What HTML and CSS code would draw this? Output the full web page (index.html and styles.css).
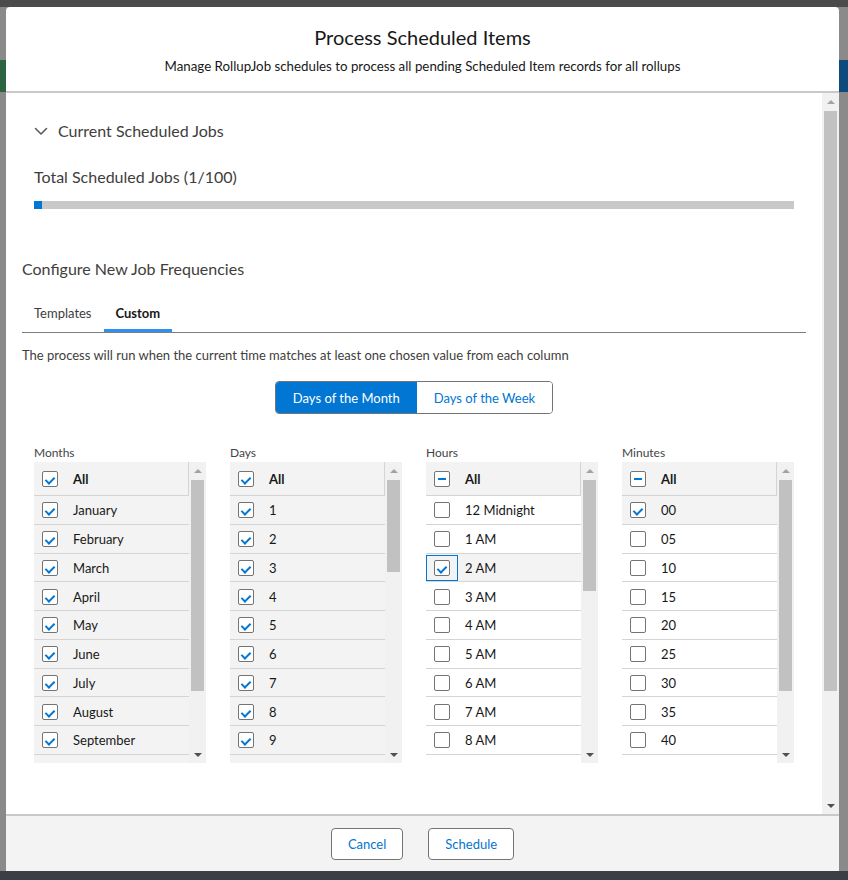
FILE: index.html
```html
<!DOCTYPE html>
<html lang="en">
<head>
<meta charset="utf-8">
<title>Process Scheduled Items</title>
<link rel="stylesheet" href="styles.css">
</head>
<body>
<div class="backdrop">
  <div class="bd-top"></div>
  <div class="bd-mid"></div>
  <div class="bd-band"></div>
  <div class="bd-rest"></div>
  <div class="bd-bottom"></div>
</div>

<section class="modal">
  <header class="modal-header">
    <h1>Process Scheduled Items</h1>
    <p>Manage RollupJob schedules to process all pending Scheduled Item records for all rollups</p>
  </header>

  <div class="modal-body">
    <div class="body-content">
      <div class="section">
        <div class="section-title">
          <svg class="chevron" width="14" height="14" viewBox="0 0 14 14"><path d="M1.5 4.5 L7 10 L12.5 4.5" fill="none" stroke="#5c5c5c" stroke-width="1.6" stroke-linecap="round" stroke-linejoin="round"/></svg>
          <span>Current Scheduled Jobs</span>
        </div>
        <div class="total">Total Scheduled Jobs (1/100)</div>
        <div class="progress"><div class="progress-fill" style="width:1%"></div></div>
      </div>

      <h2 class="configure">Configure New Job Frequencies</h2>

      <div class="tabs">
        <div class="tab">Templates</div>
        <div class="tab active">Custom</div>
      </div>

      <p class="desc">The process will run when the current time matches at least one chosen value from each column</p>

      <div class="toggle-wrap">
        <div class="btn-group">
          <button class="seg active">Days of the Month</button>
          <button class="seg">Days of the Week</button>
        </div>
      </div>

      <div class="columns">
        <div class="col">
          <div class="col-label">Months</div>
          <div class="listbox">
            <div class="list filled">
              <div class="row head"><span class="cell"><span class="cb on"></span></span><span class="label">All</span></div>
              <div class="row sel"><span class="cell"><span class="cb on"></span></span><span class="label">January</span></div>
              <div class="row sel"><span class="cell"><span class="cb on"></span></span><span class="label">February</span></div>
              <div class="row sel"><span class="cell"><span class="cb on"></span></span><span class="label">March</span></div>
              <div class="row sel"><span class="cell"><span class="cb on"></span></span><span class="label">April</span></div>
              <div class="row sel"><span class="cell"><span class="cb on"></span></span><span class="label">May</span></div>
              <div class="row sel"><span class="cell"><span class="cb on"></span></span><span class="label">June</span></div>
              <div class="row sel"><span class="cell"><span class="cb on"></span></span><span class="label">July</span></div>
              <div class="row sel"><span class="cell"><span class="cb on"></span></span><span class="label">August</span></div>
              <div class="row sel"><span class="cell"><span class="cb on"></span></span><span class="label">September</span></div>
            </div>
            <div class="vscroll">
              <span class="arrow up"></span>
              <div class="track"><div class="thumb" style="height:211px"></div></div>
              <span class="arrow down"></span>
            </div>
          </div>
        </div>

        <div class="col">
          <div class="col-label">Days</div>
          <div class="listbox">
            <div class="list filled">
              <div class="row head"><span class="cell"><span class="cb on"></span></span><span class="label">All</span></div>
              <div class="row sel"><span class="cell"><span class="cb on"></span></span><span class="label">1</span></div>
              <div class="row sel"><span class="cell"><span class="cb on"></span></span><span class="label">2</span></div>
              <div class="row sel"><span class="cell"><span class="cb on"></span></span><span class="label">3</span></div>
              <div class="row sel"><span class="cell"><span class="cb on"></span></span><span class="label">4</span></div>
              <div class="row sel"><span class="cell"><span class="cb on"></span></span><span class="label">5</span></div>
              <div class="row sel"><span class="cell"><span class="cb on"></span></span><span class="label">6</span></div>
              <div class="row sel"><span class="cell"><span class="cb on"></span></span><span class="label">7</span></div>
              <div class="row sel"><span class="cell"><span class="cb on"></span></span><span class="label">8</span></div>
              <div class="row sel"><span class="cell"><span class="cb on"></span></span><span class="label">9</span></div>
            </div>
            <div class="vscroll">
              <span class="arrow up"></span>
              <div class="track"><div class="thumb" style="height:92px"></div></div>
              <span class="arrow down"></span>
            </div>
          </div>
        </div>

        <div class="col">
          <div class="col-label">Hours</div>
          <div class="listbox">
            <div class="list">
              <div class="row head"><span class="cell"><span class="cb mixed"></span></span><span class="label">All</span></div>
              <div class="row"><span class="cell"><span class="cb"></span></span><span class="label">12 Midnight</span></div>
              <div class="row"><span class="cell"><span class="cb"></span></span><span class="label">1 AM</span></div>
              <div class="row sel"><span class="cell focus"><span class="cb on"></span></span><span class="label">2 AM</span></div>
              <div class="row"><span class="cell"><span class="cb"></span></span><span class="label">3 AM</span></div>
              <div class="row"><span class="cell"><span class="cb"></span></span><span class="label">4 AM</span></div>
              <div class="row"><span class="cell"><span class="cb"></span></span><span class="label">5 AM</span></div>
              <div class="row"><span class="cell"><span class="cb"></span></span><span class="label">6 AM</span></div>
              <div class="row"><span class="cell"><span class="cb"></span></span><span class="label">7 AM</span></div>
              <div class="row"><span class="cell"><span class="cb"></span></span><span class="label">8 AM</span></div>
            </div>
            <div class="vscroll">
              <span class="arrow up"></span>
              <div class="track"><div class="thumb" style="height:111px"></div></div>
              <span class="arrow down"></span>
            </div>
          </div>
        </div>

        <div class="col">
          <div class="col-label">Minutes</div>
          <div class="listbox">
            <div class="list">
              <div class="row head"><span class="cell"><span class="cb mixed"></span></span><span class="label">All</span></div>
              <div class="row sel"><span class="cell"><span class="cb on"></span></span><span class="label">00</span></div>
              <div class="row"><span class="cell"><span class="cb"></span></span><span class="label">05</span></div>
              <div class="row"><span class="cell"><span class="cb"></span></span><span class="label">10</span></div>
              <div class="row"><span class="cell"><span class="cb"></span></span><span class="label">15</span></div>
              <div class="row"><span class="cell"><span class="cb"></span></span><span class="label">20</span></div>
              <div class="row"><span class="cell"><span class="cb"></span></span><span class="label">25</span></div>
              <div class="row"><span class="cell"><span class="cb"></span></span><span class="label">30</span></div>
              <div class="row"><span class="cell"><span class="cb"></span></span><span class="label">35</span></div>
              <div class="row"><span class="cell"><span class="cb"></span></span><span class="label">40</span></div>
            </div>
            <div class="vscroll">
              <span class="arrow up"></span>
              <div class="track"><div class="thumb" style="height:211px"></div></div>
              <span class="arrow down"></span>
            </div>
          </div>
        </div>
      </div>
    </div>

    <div class="vscroll main">
      <span class="arrow up"></span>
      <div class="track"><div class="thumb" style="height:580px"></div></div>
      <span class="arrow down"></span>
    </div>
  </div>

  <footer class="modal-footer">
    <button class="btn">Cancel</button>
    <button class="btn">Schedule</button>
  </footer>
</section>
</body>
</html>
```

FILE: styles.css
```css
* {
  box-sizing: border-box;
  margin: 0;
  padding: 0;
}

html,
body {
  width: 848px;
  height: 880px;
  overflow: hidden;
}

body {
  position: relative;
  font-family: Lato, "Liberation Sans", sans-serif;
  color: #181818;
}

/* underlying page, dimmed */
.backdrop {
  display: flex;
  flex-direction: column;
  height: 880px;
}

.bd-top {
  height: 7px;
  background: #4b4b4b;
}

.bd-mid {
  height: 53px;
  background: #8a8a8a;
}

.bd-band {
  height: 32px;
  background: linear-gradient(to right, #2b6441 0, #2b6441 10px, #8a8a8a 10px, #8a8a8a 830px, #0f4a7c 830px);
}

.bd-rest {
  flex: 1;
  background: #8a8a8a;
}

.bd-bottom {
  height: 9px;
  background: #3b3e45;
}

/* modal */
.modal {
  position: absolute;
  top: 7px;
  left: 6px;
  width: 833px;
  height: 864px;
  background: #fff;
  border-radius: 4px 4px 0 0;
  display: flex;
  flex-direction: column;
  overflow: hidden;
}

.modal-header {
  height: 86px;
  flex-shrink: 0;
  border-bottom: 2px solid #c9c9c9;
  padding-top: 18px;
  text-align: center;
}

.modal-header h1 {
  font-size: 20px;
  font-weight: 400;
  line-height: 24px;
  color: #181818;
}

.modal-header p {
  margin-top: 9px;
  font-size: 13.3px;
  line-height: 16px;
  color: #181818;
}

.modal-body {
  height: 721px;
  flex-shrink: 0;
  display: flex;
}

.body-content {
  flex: 1;
  overflow: hidden;
  padding: 0 16px;
}

/* scrollbars */
.vscroll {
  width: 17px;
  flex-shrink: 0;
  background: #f1f1f1;
  display: flex;
  flex-direction: column;
}

.arrow {
  height: 17px;
  flex-shrink: 0;
  display: flex;
  align-items: center;
  justify-content: center;
}

.arrow.up::before {
  content: "";
  border-left: 4px solid transparent;
  border-right: 4px solid transparent;
  border-bottom: 4px solid #a3a3a3;
}

.arrow.down::before {
  content: "";
  border-left: 4px solid transparent;
  border-right: 4px solid transparent;
  border-top: 4px solid #505050;
}

.track {
  flex: 1;
  padding: 1px 2px 0;
}

.thumb {
  background: #c1c1c1;
}

/* section */
.section {
  padding: 0 12px;
}

.section-title {
  margin-top: 26px;
  display: flex;
  align-items: center;
  gap: 10px;
  font-size: 16px;
  line-height: 24px;
  color: #3e3e3c;
}

.total {
  margin-top: 22px;
  font-size: 16px;
  line-height: 24px;
  color: #3e3e3c;
}

.progress {
  margin-top: 12px;
  height: 8px;
  background: #c9c9c9;
}

.progress-fill {
  height: 100%;
  background: #0176d3;
}

.configure {
  margin-top: 48px;
  font-size: 16px;
  font-weight: 400;
  line-height: 24px;
  color: #3e3e3c;
}

.tabs {
  margin-top: 12px;
  display: flex;
  border-bottom: 1px solid #7f7f7f;
}

.tab {
  padding: 10px 12px 6px;
  font-size: 13px;
  line-height: 20px;
  color: #3e3e3c;
  border-bottom: 3px solid transparent;
}

.tab.active {
  font-weight: 700;
  color: #181818;
  border-bottom-color: #2f8ff0;
}

.desc {
  margin-top: 12px;
  font-size: 13px;
  line-height: 20px;
  color: #3e3e3c;
}

.toggle-wrap {
  margin-top: 16px;
  display: flex;
  justify-content: center;
}

.btn-group {
  display: flex;
  border: 1px solid #747474;
  border-radius: 4px;
  overflow: hidden;
}

.seg {
  height: 31px;
  padding: 1px 17px 0;
  border: 0;
  background: #fff;
  color: #0176d3;
  font-family: Lato, "Liberation Sans", sans-serif;
  font-size: 13px;
}

.seg.active {
  background: #0176d3;
  color: #fff;
}

/* columns */
.columns {
  margin-top: 30px;
  padding: 0 12px;
  display: grid;
  grid-template-columns: repeat(4, 1fr);
  gap: 24px;
}

.col-label {
  font-size: 12px;
  line-height: 17px;
  color: #444;
  margin-bottom: 1px;
}

.listbox {
  height: 301px;
  display: flex;
}

.list {
  flex: 1;
  overflow: hidden;
  background: #fff;
}

.list.filled {
  background: #f3f3f3;
}

.row {
  display: flex;
  align-items: center;
  height: 28.75px;
  padding-top: 1px;
  border-bottom: 1px solid #d4d4d4;
  background: #fff;
  font-size: 13px;
  color: #181818;
}

.row.sel {
  background: #f3f3f3;
}

.row.head {
  height: 34px;
  background: #f3f3f3;
  font-weight: 700;
  border-right: 1px solid #d4d4d4;
}

.cell {
  width: 32px;
  height: 100%;
  flex-shrink: 0;
  display: flex;
  align-items: center;
  justify-content: center;
}

.cell.focus {
  border: 1px solid #0176d3;
}

.label {
  padding-left: 7px;
}

.cb {
  width: 16px;
  height: 16px;
  border: 1px solid #747474;
  border-radius: 2px;
  background: #fff;
  display: flex;
  align-items: center;
  justify-content: center;
}

.cb.on::after {
  content: "";
  width: 4px;
  height: 7px;
  margin-top: 1px;
  border: solid #0176d3;
  border-width: 0 2px 2px 0;
  transform: rotate(45deg);
}

.cb.mixed::after {
  content: "";
  width: 8px;
  height: 2px;
  background: #0176d3;
}

/* footer */
.modal-footer {
  flex: 1;
  border-top: 2px solid #c9c9c9;
  background: #f3f3f3;
  display: flex;
  justify-content: center;
  align-items: flex-start;
  gap: 25px;
  padding-top: 12px;
}

.btn {
  height: 32px;
  padding: 0 16px;
  border: 1px solid #747474;
  border-radius: 4px;
  background: #fff;
  color: #0176d3;
  font-family: Lato, "Liberation Sans", sans-serif;
  font-size: 13px;
}
```
